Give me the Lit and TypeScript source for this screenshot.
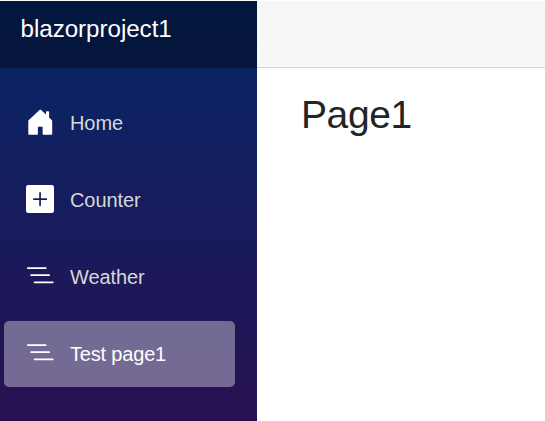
import { LitElement, html, css, svg } from "lit";
import { customElement } from "lit/decorators.js";
import { classMap } from "lit/directives/class-map.js";

const nested = "M7.7 20.3a.9.9 0 0 1 .9-.9h18.2a.9.9 0 0 1 0 1.8H8.6a.9.9 0 0 1-.9-.9zM4.3 13.2a.9.9 0 0 1 .9-.9h17.9a.9.9 0 0 1 0 1.8H5.2a.9.9 0 0 1-.9-.9zM.9 6.1a.9.9 0 0 1 .9-.9h17.9a.9.9 0 0 1 0 1.8H1.8a.9.9 0 0 1-.9-.9z";
const house = "M11.9 26V18.8H16.6V26a.8.8 0 0 0 .8.8H25.4a.8.8 0 0 0 .8-.8V12.9a1 1 0 0 0-.3-.7L23.1 9.5V4.1a.8.8 0 0 0-.8-.8H20.8a.8.8 0 0 0-.8.8V6.5L15 1.9a1.1 1.1 0 0 0-1.5 0L2.6 12.2a1 1 0 0 0-.3.7V26a.8.8 0 0 0 .8.8H11.1a.8.8 0 0 0 .8-.8Z";
const plus = "M2.2 0A2.2 2.2 0 0 0 0 2.2V25.8A2.2 2.2 0 0 0 2.2 28H25.8A2.2 2.2 0 0 0 28 25.8V2.2A2.2 2.2 0 0 0 25.8 0ZM14.9 7.9V13.3H20.3a.85.85 0 0 1 0 1.7H14.9V20.3a.85.85 0 0 1-1.7 0V15H7.9a.85.85 0 0 1 0-1.7H13.2V7.9a.85.85 0 0 1 1.7 0Z";

const items = [
  { label: "Home", icon: house, active: false },
  { label: "Counter", icon: plus, active: false },
  { label: "Weather", icon: nested, active: false },
  { label: "Test page1", icon: nested, active: true },
];

@customElement("app-root")
export class AppRoot extends LitElement {
  static styles = css`
    :host {
      display: flex;
      box-sizing: border-box;
      height: 421px;
      padding-top: 1px;
      overflow: hidden;
      background: #fff;
      font-family: "Liberation Sans", Arial, sans-serif;
    }
    .sidebar {
      width: 257px;
      flex: none;
      background: linear-gradient(180deg, #052767 0, #3a0647 638px);
    }
    .brand {
      box-sizing: border-box;
      height: 67px;
      padding: 13px 0 0 20.5px;
      background: rgba(0, 0, 0, 0.4);
      color: #fff;
      font-size: 24.2px;
      letter-spacing: -0.05px;
      line-height: 30px;
    }
    .nav {
      display: flex;
      flex-direction: column;
      gap: 11px;
      padding: 22px 22px 0 4px;
    }
    .link {
      display: flex;
      align-items: center;
      box-sizing: border-box;
      height: 66px;
      padding-left: 22px;
      border-radius: 5px;
      color: #d7d7d7;
      font-size: 20px;
      letter-spacing: -0.08px;
    }
    .link.active {
      background: rgba(255, 255, 255, 0.37);
      color: #fff;
      letter-spacing: -0.18px;
    }
    .icon {
      width: 28px;
      height: 28px;
      flex: none;
      margin: 0 16px 2px 0;
      fill: #fff;
    }
    .main {
      flex: 1;
    }
    .bar {
      box-sizing: border-box;
      height: 67px;
      background: #f7f7f7;
      border-bottom: 1px solid #d6d5d5;
    }
    .title {
      margin: 0;
      padding: 23px 0 0 44px;
      color: #212529;
      font-size: 39px;
      font-weight: 400;
      letter-spacing: -0.4px;
      line-height: 47px;
    }
  `;

  render() {
    return html`
      <aside class="sidebar">
        <div class="brand">blazorproject1</div>
        <nav class="nav">
          ${items.map(
            (item) => html`<a class=${classMap({ link: true, active: item.active })}>
              <svg class="icon" viewBox="0 0 28 28">${svg`<path d=${item.icon}></path>`}</svg>
              <span>${item.label}</span>
            </a>`
          )}
        </nav>
      </aside>
      <main class="main">
        <div class="bar"></div>
        <h1 class="title">Page1</h1>
      </main>
    `;
  }
}
